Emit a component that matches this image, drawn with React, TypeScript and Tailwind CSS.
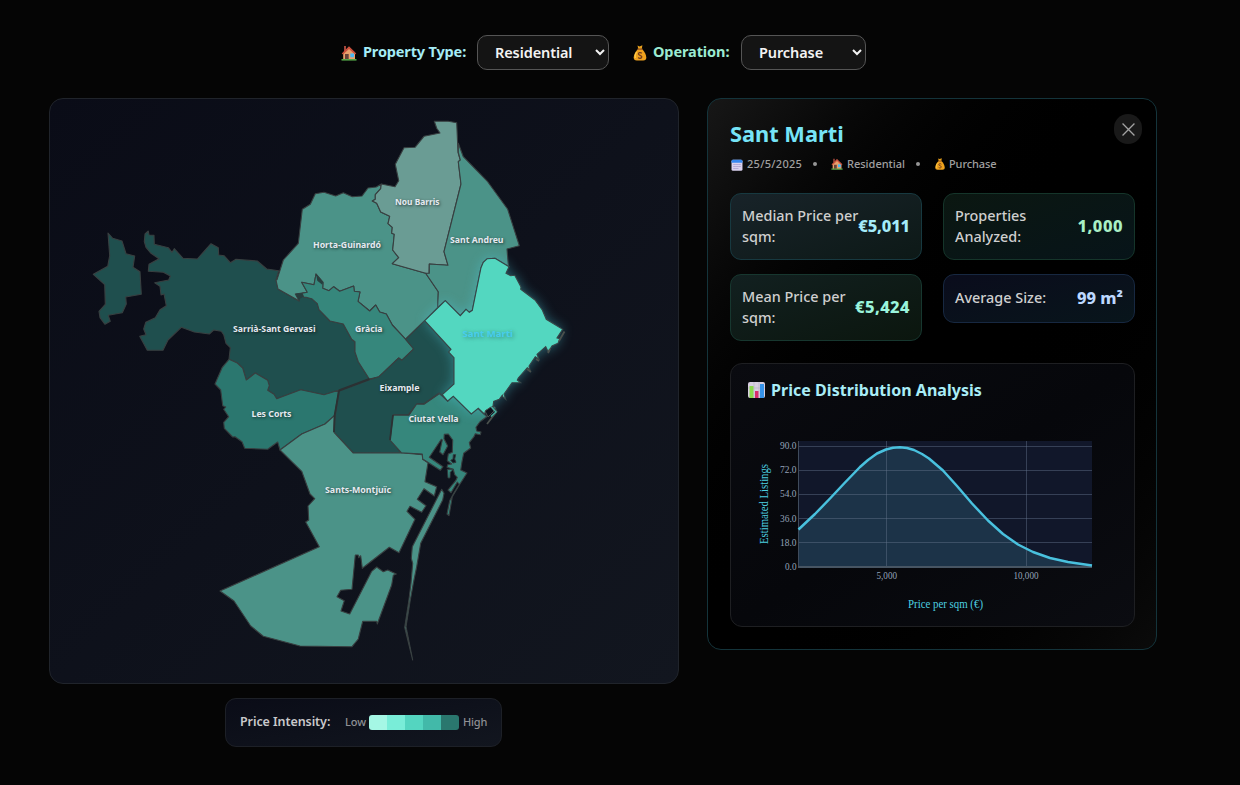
import React from "react";

type Segment = [number, number, string];

/* Joins outline segments; each has its own origin and is drawn in thirds of a pixel. */
const outline = (...segments: Segment[]) =>
  segments
    .map(([ox, oy, pts]) =>
      pts
        .split(" ")
        .map((p) => {
          const [x, y] = p.split(",").map(Number);
          return `${(ox + x / 3).toFixed(1)},${(oy + y / 3).toFixed(1)}`;
        })
        .join(" "),
    )
    .join(" ");

const reverse = (pts: string) => pts.split(" ").reverse().join(" ");

const graciaTop =
  "617,208 577,165 559,132 539,126 527,105 509,123 474,94 480,66 463,64 461,48 419,64 401,50 387,62 368,55 369,37 348,12 342,44 305,37 322,67";
const graciaWest =
  "508,327 475,275 465,246 465,215 455,208 430,162 390,153 357,119 352,101 335,86 318,82 311,81 306,70";
const lesCortsTop =
  "87,268 112,279 128,294 139,330 166,309 203,331 208,347 203,361 222,373 230,386 302,359 372,374 416,361";
const nouBarrisWest =
  "364,222 362,236 346,254 346,268 337,273 350,280 362,306 389,319 384,341 397,352 395,370 403,373 398,420 416,443 397,461 497,490";
const martiNorth =
  "327,110 285,85 262,86 250,97 243,113 217,241 208,247 198,238 181,257 136,212";
const martiWest = "74,272 153,358 146,366 162,383 162,462 127,494";

const districts: { name: string; fill: string; points: string }[] = [
  {
    name: "Sarrià islet",
    fill: "#1f4f4e",
    points: outline([80, 215, "84,54 98,70 126,78 138,116 164,123 159,157 180,170 184,238 137,246 139,267 127,293 85,301 91,319 75,328 60,308 57,289 76,268 74,209 40,178 83,154 89,122"]),
  },
  {
    name: "Sarrià-Sant Gervasi",
    fill: "#1f4f4e",
    points: outline(
      [80, 215, "205,48 195,57 193,80 198,97 213,115 237,131 207,148 205,169 250,172 271,183 266,195 224,203 240,214 243,240 252,237 259,272 240,284 226,308 197,322 191,342 198,359 179,364 202,406 249,406 264,375 304,337 343,351 388,357 401,345 424,349 431,359 438,385 451,398"],
      [200, 270, lesCortsTop],
      [200, 270, graciaWest],
      [200, 270, "287,71 298,93 234,57 228,30"],
      [80, 215, "596,167 560,162 532,138 468,133 451,143 432,122 416,120 415,98 393,86 352,132 309,130 283,101 276,112 265,98 223,88 222,61 207,60"],
    ),
  },
  {
    name: "Horta-Guinardó",
    fill: "#4b9388",
    points: outline(
      [260, 110, "51,509 70,450 115,400 127,298 151,283 166,251 192,247 227,258 250,248 277,260 306,258 324,234 349,231"],
      [260, 110, nouBarrisWest],
      [400, 230, "115,185 113,232 74,272 17,327"],
      [200, 270, graciaTop],
      [200, 270, "286,72 298,93 234,57 228,30"],
    ),
  },
  {
    name: "Nou Barris",
    fill: "#6a9c94",
    points: outline(
      [260, 110, "523,34 565,34 590,38 594,127 601,150 595,155 603,222 552,425 564,466 508,462 507,491"],
      [260, 110, reverse(nouBarrisWest)],
      [260, 110, "405,230 416,212 406,163 432,113 465,112 492,79 540,69 530,55"],
    ),
  },
  {
    name: "Sant Andreu",
    fill: "#4b9388",
    points: outline(
      [260, 110, "595,100 610,140 683,215 743,298 778,407 741,417 745,467"],
      [400, 230, martiNorth],
      [400, 230, "113,232 115,185 77,130 88,130 88,102 144,106 132,65"],
      [260, 110, "603,222 595,155 601,150 595,127"],
    ),
  },
  {
    name: "Gràcia",
    fill: "#36877c",
    points: outline([200, 270, reverse(graciaWest)], [200, 270, "537,320 596,264 605,271 641,237"], [200, 270, graciaTop]),
  },
  {
    name: "Les Corts",
    fill: "#2b776f",
    points: outline(
      [200, 270, lesCortsTop],
      [200, 270, "404,436 375,462 305,492 240,540 233,516 203,538 134,535 126,515 105,500 98,501 73,475 71,457 86,440 71,418 77,411 68,407 62,360 45,342 67,292"],
    ),
  },
  {
    name: "Eixample",
    fill: "#1f4f4e",
    points: outline(
      [200, 270, "418,363 508,329 537,320 596,264 605,271 641,237 617,208"],
      [400, 230, martiWest],
      [400, 230, "117,489 72,521 52,521 25,554"],
      [200, 270, "580,434 570,509 603,548 460,549 402,487 406,436"],
    ),
  },
  {
    name: "Sants-Montjuïc",
    fill: "#4b9388",
    points: outline(
      [200, 270, "240,540 305,492 375,462 404,436 402,487 460,549 603,548 667,554"],
      [200, 430, "668,88 684,98 675,155 710,170 703,198 672,176 652,208 678,227 665,247 630,229 621,244 645,268 597,368 568,352 487,415 482,377 476,383 475,375 466,375 456,478 422,481 411,500 433,512 423,543 449,552 515,424 530,411 550,425 563,420 589,432 580,436 575,465 532,582 530,574 488,574 475,627 456,650 300,648 190,619 152,588 102,513 60,483 358,350 317,276 326,270 324,228 344,206 330,192 305,124"],
    ),
  },
  {
    name: "Breakwater",
    fill: "#4b9388",
    points: outline([200, 430, "725,178 732,190 728,210 662,340 650,410 640,460 630,515 618,590 638,690 614,592 626,515 633,460 638,400 634,385 637,350"]),
  },
  {
    name: "Ciutat Vella",
    fill: "#36877c",
    points: outline([
      370,
      390,
      "117,76 140,42 162,43 208,11 218,20 233,34 250,17 304,71 322,54 350,80 330,95 318,112 320,123 333,126 331,134 316,131 312,140 298,158 302,174 281,190 276,215 272,240 291,249 266,288 247,320 237,377 231,372 239,332 251,310 268,283 262,276 243,308 234,300 257,272 262,262 254,254 250,238 231,232 233,224 245,222 232,212 235,192 247,187 248,150 235,132 223,133 222,146 233,168 219,194 209,186 217,150 214,148 178,202 219,230 211,241 158,207 157,192 94,188 60,150 69,75",
    ]),
  },
];

const santMarti = outline(
  [400, 230, martiWest],
  [400, 230, "143,513 160,499 214,552 235,535 253,552 258,542 277,530 290,544 285,532 279,528 281,514 298,508 307,496 308,500 317,508 312,492 336,458 362,458 352,450 355,444 382,413 390,420 387,408 406,380 417,388 411,373 437,350 445,366 456,348 474,340 480,326 471,324 488,298 439,268 427,240 405,210 362,178 363,171 344,136 332,137 318,130"],
  [400, 230, martiNorth],
);

const labels: [string, number, number, number][] = [
  ["Nou Barris", 395, 205, 44.5],
  ["Horta-Guinardó", 313, 248, 68],
  ["Sant Andreu", 450, 243, 53.5],
  ["Sarrià-Sant Gervasi", 233, 332, 82.5],
  ["Gràcia", 355, 332, 27.5],
  ["Eixample", 379.5, 391, 40],
  ["Les Corts", 251.5, 417, 40],
  ["Ciutat Vella", 408.5, 422, 50],
  ["Sants-Montjuïc", 325, 493, 66],
];

const House = ({ className }: { className: string }) => (
  <svg viewBox="0 0 16 16" className={className}>
    <path d="M3 1h2v5H3z" fill="#a4473c" />
    <path d="M2.2 7.5 8 2l6 5.5V15H2.2z" fill="#e8a06c" />
    <path d="M.7 8.5 8 1.3l7.3 7.2-1.3 1L8 4 2 9.5z" fill="#cb4f3c" />
    <path d="M4 9h3.700v6H4z" fill="#684239" />
    <path d="M9.300 8.500h3.700v3.700H9.300z" fill="#49b8f5" />
    <path d="M.5 14h15v1.600H.5z" fill="#52a447" />
  </svg>
);

const MoneyBag = ({ className }: { className: string }) => (
  <svg viewBox="0 0 16 16" className={className}>
    <path d="m5.500.5 2 .9L10.400.3 9.800 4H6.300z" fill="#e8a11c" />
    <path d="M6 4h4c2.600 2.500 4.300 6 4.300 8.600 0 2-1 3-3 3H4.700c-2 0-3-1-3-3C1.700 10 3.400 6.500 6 4z" fill="#efa21e" />
    <path d="M4.500 7c-1.300 2-1.700 4-1.300 6" stroke="#ffd14f" strokeWidth="1.200" fill="none" />
    <path d="M5.500 3.500h5v1.200h-5z" fill="#8d4c23" />
    <path d="M9.800 8.300C8.500 7 6.300 7.600 6.400 9s3.400 1.200 3.400 2.800-2.400 2-3.600.7" stroke="#713d20" strokeWidth="1.300" fill="none" />
  </svg>
);

const Calendar = ({ className }: { className: string }) => (
  <svg viewBox="0 0 16 16" className={className}>
    <rect x=".7" y="1" width="14.600" height="14.500" rx="2" fill="#d9d1ee" />
    <path d="M.7 5V3c0-1.300.7-2 2-2h10.600c1.300 0 2 .7 2 2v2z" fill="#3787ef" />
    <path d="M3.200 7.300h9.600M3.200 10h9.600M3.200 12.700h6.600" stroke="#a79bcc" strokeWidth="1.500" strokeDasharray="1.800 .8" />
  </svg>
);

const BarsIcon = ({ className }: { className: string }) => (
  <svg viewBox="0 0 17 16" className={className}>
    <rect width="17" height="16" rx="2" fill="#d8cfe0" />
    <path d="M6 0v16M11 0v16M0 6h17" stroke="#bcb1ca" strokeWidth=".7" />
    <path d="M1.500 4h4v12h-4z" fill="#8bd84c" />
    <path d="M7 9h3.500v7H7z" fill="#d92d6d" />
    <path d="M12 2h4v14h-4z" fill="#3693ea" />
  </svg>
);

function DistrictMap() {
  return (
    <svg viewBox="50 99 628 584" width="628" height="584" className="block">
      <g stroke="#383f40" strokeWidth="1.1" strokeLinejoin="round">
        {districts.map((d) => (
          <polygon key={d.name} points={d.points} fill={d.fill} />
        ))}
      </g>
      <polyline points="339,390.500 369.500,379" stroke="#2b3133" strokeWidth="2.300" fill="none" />
      <polyline points="339,390.500 334.500,416 334,432" stroke="#2b3133" strokeWidth="1.800" fill="none" />
      <polyline points="393,415 390,440" stroke="#2b3133" strokeWidth="1.800" fill="none" />
      <polygon points={outline([200, 270, "348,12 358,24 369,37 367,44 352,32"])} fill="#263e3e" />
      <polygon points={outline([200, 270, "287,71 306,70 310,80 300,86 298,93"])} fill="#263e3e" />
      <g fill="#36877c" stroke="#30393b" strokeWidth=".9">
        <polygon points={outline([370, 390, "250,194 257,194 254,207 258,217 249,219 242,211 249,207"])} fill="#10161f" />
        <polygon points={outline([370, 390, "232,238 250,238 241,247 240,264 234,264"])} />
      </g>
      <polygon
        points={santMarti}
        fill="#53d7c0"
        stroke="#374547"
        strokeWidth="1.100"
        className="drop-shadow-[0_0_6px_rgba(77,208,225,0.4)]"
      />
      <path d="M564.500 331.500 559 341M497 411l-10 13M548 353l2-4M536 359l3 2M527 369l4 3" stroke="#4a504c" strokeWidth="1.800" />
      <path d="m485 411 6-4 3 4-6 6z" fill="#0d131d" stroke="#46504e" />
      <path d="m491.500 407 4.500 5-5 4.500" fill="none" stroke="#45b3a3" strokeWidth="1.300" />
      <g
        fontFamily="'Noto Sans', sans-serif"
        fontSize="8.800"
        fontWeight="700"
        fill="#e5e9f0"
        className="[text-shadow:1px_1px_3px_rgba(0,0,0,0.6)]"
      >
        {labels.map(([name, x, y, width]) => (
          <text key={name} x={x} y={y} textLength={width} lengthAdjust="spacingAndGlyphs">
            {name}
          </text>
        ))}
        <text
          x="462.500"
          y="337"
          textLength="50.500"
          lengthAdjust="spacingAndGlyphs"
          fontSize="9.500"
          fill="#47cdec"
          className="[text-shadow:1px_1px_4px_rgba(0,0,0,0.35)]"
        >
          Sant Marti
        </text>
      </g>
    </svg>
  );
}

const curve =
  "798.500,529.500 815,514 830,498.500 845,482.500 860,467 868,460 877,453.500 886,449.500 893,447.800 900,447.200 907,448 914,450 922,454 929,458.500 943,470.500 957,486 972,503.500 988,520.500 1003,534 1018,544.500 1033,552 1050,558 1068,562 1092,565.500";

function PriceChart() {
  return (
    <svg viewBox="747 408 372 210" width="372" height="210" className="block">
      <rect x="798.500" y="441" width="293.500" height="126" fill="#11172a" />
      <polygon points={`${curve} 1092,567 798.500,567`} fill="#1c3348" />
      <path
        d="M798 446.500h294M798 470.500h294M798 494.500h294M798 518.500h294M798 542.500h294M886.500 441v126M1026.500 441v126"
        stroke="#64748b"
        strokeOpacity=".45"
      />
      <path d="M798.500 441v126" stroke="#3f4b5c" />
      <path d="M798 567h294" stroke="#475563" strokeWidth="2" />
      <polyline points={curve} fill="none" stroke="#49c1de" strokeWidth="2.500" strokeLinejoin="round" />
      <g fontFamily="'Liberation Serif', serif" fontSize="10" fill="#94a3b8">
        {["90.0", "72.0", "54.0", "36.0", "18.0"].map((t, i) => (
          <text key={t} x="780" y={449 + i * 24.2} textLength="16.500" lengthAdjust="spacingAndGlyphs">
            {t}
          </text>
        ))}
        <text x="785" y="570" textLength="11.500" lengthAdjust="spacingAndGlyphs">0.0</text>
        <text x="876.500" y="579" textLength="20.500" lengthAdjust="spacingAndGlyphs">5,000</text>
        <text x="1013.500" y="579" textLength="25" lengthAdjust="spacingAndGlyphs">10,000</text>
      </g>
      <g fontFamily="'Liberation Serif', serif" fontSize="11.500" fill="#4dd0e1">
        <text x="908" y="608" textLength="75" lengthAdjust="spacingAndGlyphs">Price per sqm (€)</text>
        <text transform="translate(768 544) rotate(-90)" textLength="80" lengthAdjust="spacingAndGlyphs">
          Estimated Listings
        </text>
      </g>
    </svg>
  );
}

const selectClass =
  "h-[35px] rounded-[10px] border border-[#555] bg-[#141414] pl-[13px] pb-[1px] text-[14.500px] font-semibold text-[#f3f3f3] tracking-[-0.1px]";

function Stat({ label, value, box, color }: { label: string; value: string; box: string; color: string }) {
  return (
    <div className={`flex items-center justify-between rounded-[11px] border px-[11px] pb-[1px] ${box}`}>
      <span className="w-0 text-[14.400px] font-medium leading-[21.500px] text-[#cfcfcf] whitespace-pre">{label}</span>
      <span className={`text-[16.500px] font-extrabold whitespace-nowrap ${color}`}>{value}</span>
    </div>
  );
}

export default function App() {
  return (
    <div className="h-[785px] w-[1240px] overflow-hidden bg-[#050505] pl-[49px] pt-[35px] font-['Noto_Sans',sans-serif]">
      <header className="ml-[292px] flex h-[35px] items-center">
        <House className="size-[16px]" />
        <span className="ml-[6px] w-[114px] pb-[2px] text-[14.500px] font-bold tracking-[-0.15px] text-[#a5ecf6] whitespace-nowrap">Property Type:</span>
        <select className={`${selectClass} w-[132px]`}>
          <option>Residential</option>
        </select>
        <MoneyBag className="ml-[23px] size-[16px]" />
        <span className="ml-[5px] w-[88px] pb-[2px] text-[14.500px] font-bold tracking-[-0.1px] text-[#9cebd2] whitespace-nowrap">Operation:</span>
        <select className={`${selectClass} w-[125px]`}>
          <option>Purchase</option>
        </select>
      </header>

      <main className="mt-[28px] flex items-start gap-[28px]">
        <section className="flex w-[630px] flex-col">
          <div className="h-[586px] rounded-[14px] border border-[#20242b] bg-linear-to-br from-[#0a0c17] to-[#12161f]">
            <DistrictMap />
          </div>
          <div className="ml-[176px] mt-[14px] flex h-[49px] w-[277px] items-center rounded-[11px] border border-[#1d2027] bg-linear-to-br from-[#0a0c17] to-[#12161f] pl-[14px]">
            <span className="w-[105px] text-[12.500px] font-semibold tracking-[-0.08px] text-[#c9c9cb] whitespace-nowrap">Price Intensity:</span>
            <span className="w-[24px] text-[11px] font-medium text-[#8f9094]">Low</span>
            <div className="flex h-[15px] w-[90px] overflow-hidden rounded-[3px]">
              <i className="flex-1 bg-[#a5f7e5]" />
              <i className="flex-1 bg-[#79edd8]" />
              <i className="flex-1 bg-[#54d5c0]" />
              <i className="flex-1 bg-[#42b9a9]" />
              <i className="flex-1 bg-[#2a776e]" />
            </div>
            <span className="ml-[4px] text-[11px] font-medium tracking-[-0.2px] text-[#8f9094]">High</span>
          </div>
        </section>

        <aside className="h-[552px] w-[450px] rounded-[14px] border border-[#14343b] bg-linear-to-br from-[#171717] via-black to-[#0b0b0b] px-[22px] pt-[15px]">
          <div className="flex justify-between">
            <div>
              <h2 className="pt-[5px] text-[21.800px] font-bold leading-[30px] text-[#76e4f7]">Sant Marti</h2>
              <div className="mt-[6px] flex h-[18px] items-center text-[11px] font-medium text-[#a0a0a0]">
                <Calendar className="ml-[1px] mt-[1px] size-[12px]" />
                <span className="ml-[4px] w-[66px] tracking-[0.3px]">25/5/2025</span>
                <i className="size-[4px] rounded-full bg-[#969696]" />
                <House className="ml-[14px] size-[12px]" />
                <span className="ml-[4px] w-[69px]">Residential</span>
                <i className="size-[4px] rounded-full bg-[#969696]" />
                <MoneyBag className="ml-[14px] size-[12px]" />
                <span className="ml-[3px] tracking-[-0.1px]">Purchase</span>
              </div>
            </div>
            <button className="-mr-[8px] flex h-[30px] w-[28px] items-center justify-center rounded-full bg-[#191919]">
              <svg viewBox="0 0 12 12" className="size-[13px]" fill="none" stroke="#a3a3a3" strokeWidth="1.200">
                <path d="m.5.5 11 11m0-11-11 11" />
              </svg>
            </button>
          </div>

          <div className="mt-[20px] grid grid-cols-[192px_192px] items-start gap-x-[21px] gap-y-[14px]">
            <Stat label={"Median Price per\nsqm:"} value="€5,011" color="text-[#a5ecf9] tracking-[-0.15px]" box="h-[67px] border-[#173940] bg-linear-to-br from-[#182329] to-[#0d1917]" />
            <Stat label={"Properties\nAnalyzed:"} value="1,000" color="text-[#a9efc5] tracking-[0.5px]" box="h-[67px] border-[#15352a] bg-linear-to-br from-[#0b1711] to-[#071419]" />
            <Stat label={"Mean Price per\nsqm:"} value="€5,424" color="text-[#9af4dc] tracking-[0.4px]" box="h-[67px] border-[#17372f] bg-linear-to-br from-[#122020] to-[#0b160e]" />
            <Stat label="Average Size:" value="99 m²" color="text-[#bcd8ff]" box="h-[49px] border-[#172841] bg-linear-to-br from-[#0a0c1c] to-[#08151b]" />
          </div>

          <div className="mt-[22px] h-[264px] w-[405px] rounded-[12px] border border-[#1e1f22] bg-linear-to-br from-[#0a0b10] via-[#06070b] to-[#0b0c11] px-[16px] pt-[13px]">
            <h3 className="flex h-[27px] items-center gap-[6px] pb-[1px] text-[16px] font-bold tracking-[0.04px] text-[#a9edf7] whitespace-nowrap">
              <BarsIcon className="ml-[1px] h-[16px] w-[17px]" />
              <span>Price Distribution Analysis</span>
            </h3>
            <div className="mt-[4px]">
              <PriceChart />
            </div>
          </div>
        </aside>
      </main>
    </div>
  );
}
